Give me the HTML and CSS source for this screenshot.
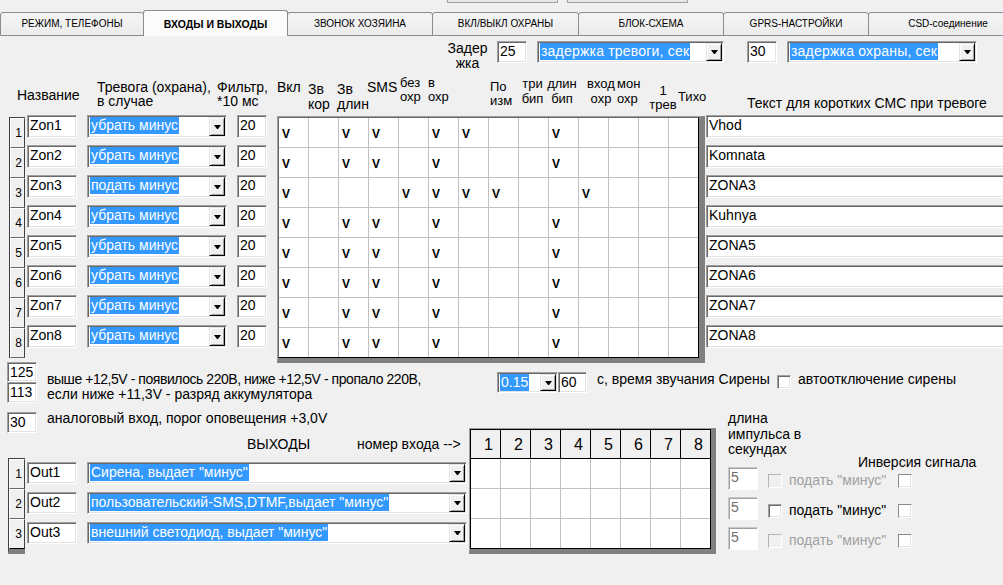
FILE: index.html
```html
<!DOCTYPE html>
<html lang="ru">
<head>
<meta charset="utf-8">
<title>Входы и выходы</title>
<link rel="stylesheet" href="styles.css">
</head>
<body>
<div class="topstrip"><span class="tb tb1"></span><span class="tb tb2"></span></div>
<div class="tabs">
  <div class="tab tw1">РЕЖИМ, ТЕЛЕФОНЫ</div>
  <div class="tab tw2 active">ВХОДЫ И ВЫХОДЫ</div>
  <div class="tab tw3">ЗВОНОК ХОЗЯИНА</div>
  <div class="tab tw4">ВКЛ/ВЫКЛ ОХРАНЫ</div>
  <div class="tab tw5">БЛОК-СХЕМА</div>
  <div class="tab tw6">GPRS-НАСТРОЙКИ</div>
  <div class="tab tw7">CSD-соединение</div>
</div>

<div class="delayrow">
  <div class="delaylbl">Задер<br>жка</div>
  <div class="tx d30">25</div>
  <div class="sel s187"><span class="hl wide">задержка тревоги, сек</span><span class="dd"></span></div>
  <div class="tx d30 gap23">30</div>
  <div class="sel s190"><span class="hl wide">задержка охраны, сек</span><span class="dd"></span></div>
</div>

<div class="heads">
  <div class="h h-name">Название</div>
  <div class="h h-trev">Тревога (охрана),<br>в случае</div>
  <div class="h h-filt">Фильтр,<br>*10 мс</div>
  <div class="h h-vkl">Вкл</div>
  <div class="h h-zk">Зв<br>кор</div>
  <div class="h h-zd">Зв<br>длин</div>
  <div class="h h-sms">SMS</div>
  <div class="h sm h-boh">без<br>охр</div>
  <div class="h sm h-voh">в<br>охр</div>
  <div class="h sm h-pi">По<br>изм</div>
  <div class="h sm h-tb">три<br>бип</div>
  <div class="h sm h-db">длин<br>бип</div>
  <div class="h h-sp"></div>
  <div class="h sm h-vh">вход<br>охр</div>
  <div class="h sm h-mo">мон<br>охр</div>
  <div class="h sm h-1t">1<br>трев</div>
  <div class="h sm h-ti">Тихо</div>
  <div class="h h-txt">Текст для коротких СМС при тревоге</div>
</div>

<div class="zones">
  <div class="rn">
    <div class="rb">1</div><div class="rb">2</div><div class="rb">3</div><div class="rb">4</div>
    <div class="rb">5</div><div class="rb">6</div><div class="rb">7</div><div class="rb">8</div>
  </div>
  <div class="zf">
    <div class="zrow"><div class="tx nm">Zon1</div><div class="sel s140"><span class="hl">убрать минус</span><span class="dd"></span></div><div class="tx fl">20</div></div>
    <div class="zrow"><div class="tx nm">Zon2</div><div class="sel s140"><span class="hl">убрать минус</span><span class="dd"></span></div><div class="tx fl">20</div></div>
    <div class="zrow"><div class="tx nm">Zon3</div><div class="sel s140"><span class="hl">подать минус</span><span class="dd"></span></div><div class="tx fl">20</div></div>
    <div class="zrow"><div class="tx nm">Zon4</div><div class="sel s140"><span class="hl">убрать минус</span><span class="dd"></span></div><div class="tx fl">20</div></div>
    <div class="zrow"><div class="tx nm">Zon5</div><div class="sel s140"><span class="hl">убрать минус</span><span class="dd"></span></div><div class="tx fl">20</div></div>
    <div class="zrow"><div class="tx nm">Zon6</div><div class="sel s140"><span class="hl">убрать минус</span><span class="dd"></span></div><div class="tx fl">20</div></div>
    <div class="zrow"><div class="tx nm">Zon7</div><div class="sel s140"><span class="hl">убрать минус</span><span class="dd"></span></div><div class="tx fl">20</div></div>
    <div class="zrow"><div class="tx nm">Zon8</div><div class="sel s140"><span class="hl">убрать минус</span><span class="dd"></span></div><div class="tx fl">20</div></div>
  </div>
  <div class="gw">
    <div class="grid">
      <span class="c">V</span><span class="c"></span><span class="c">V</span><span class="c">V</span><span class="c"></span><span class="c">V</span><span class="c">V</span><span class="c"></span><span class="c"></span><span class="c">V</span><span class="c"></span><span class="c"></span><span class="c"></span><span class="c"></span>
      <span class="c">V</span><span class="c"></span><span class="c">V</span><span class="c">V</span><span class="c"></span><span class="c">V</span><span class="c"></span><span class="c"></span><span class="c"></span><span class="c">V</span><span class="c"></span><span class="c"></span><span class="c"></span><span class="c"></span>
      <span class="c">V</span><span class="c"></span><span class="c"></span><span class="c"></span><span class="c">V</span><span class="c">V</span><span class="c">V</span><span class="c">V</span><span class="c"></span><span class="c"></span><span class="c">V</span><span class="c"></span><span class="c"></span><span class="c"></span>
      <span class="c">V</span><span class="c"></span><span class="c">V</span><span class="c">V</span><span class="c"></span><span class="c">V</span><span class="c"></span><span class="c"></span><span class="c"></span><span class="c">V</span><span class="c"></span><span class="c"></span><span class="c"></span><span class="c"></span>
      <span class="c">V</span><span class="c"></span><span class="c">V</span><span class="c">V</span><span class="c"></span><span class="c">V</span><span class="c"></span><span class="c"></span><span class="c"></span><span class="c">V</span><span class="c"></span><span class="c"></span><span class="c"></span><span class="c"></span>
      <span class="c">V</span><span class="c"></span><span class="c">V</span><span class="c">V</span><span class="c"></span><span class="c">V</span><span class="c"></span><span class="c"></span><span class="c"></span><span class="c">V</span><span class="c"></span><span class="c"></span><span class="c"></span><span class="c"></span>
      <span class="c">V</span><span class="c"></span><span class="c">V</span><span class="c">V</span><span class="c"></span><span class="c">V</span><span class="c"></span><span class="c"></span><span class="c"></span><span class="c">V</span><span class="c"></span><span class="c"></span><span class="c"></span><span class="c"></span>
      <span class="c">V</span><span class="c"></span><span class="c">V</span><span class="c">V</span><span class="c"></span><span class="c">V</span><span class="c"></span><span class="c"></span><span class="c"></span><span class="c">V</span><span class="c"></span><span class="c"></span><span class="c"></span><span class="c"></span>
    </div>
  </div>
  <div class="sms">
    <div class="tx smt">Vhod</div>
    <div class="tx smt">Komnata</div>
    <div class="tx smt">ZONA3</div>
    <div class="tx smt">Kuhnya</div>
    <div class="tx smt">ZONA5</div>
    <div class="tx smt">ZONA6</div>
    <div class="tx smt">ZONA7</div>
    <div class="tx smt">ZONA8</div>
  </div>
</div>

<div class="power">
  <div class="vs"><div class="tx v1">125</div><div class="tx v2">113</div></div>
  <div class="ptext"><span class="narrow">выше +12,5V - появилось 220В, ниже +12,5V - пропало 220В,</span><br>если ниже +11,3V - разряд аккумулятора</div>
  <div class="sel s60"><span class="hl">0.15</span><span class="dd"></span></div>
  <div class="tx t60">60</div>
  <div class="sir">с, время звучания Сирены</div>
  <div class="cb cba"></div>
  <div class="auto">автоотключение сирены</div>
</div>

<div class="lower">
  <div class="ll">
    <div class="analog"><div class="tx a30">30</div><div class="atext">аналоговый вход, порог оповещения +3,0V</div></div>
    <div class="outhead"><div class="oh1">ВЫХОДЫ</div><div>номер входа --&gt;</div></div>
    <div class="outrows">
      <div class="rn orn"><div class="rb">1</div><div class="rb">2</div><div class="rb">3</div></div>
      <div class="of">
        <div class="orow"><div class="tx onm">Out1</div><div class="sel s380"><span class="hl">Сирена, выдает "минус"</span><span class="dd"></span></div></div>
        <div class="orow"><div class="tx onm">Out2</div><div class="sel s380"><span class="hl">пользовательский-SMS,DTMF,выдает "минус"</span><span class="dd"></span></div></div>
        <div class="orow"><div class="tx onm">Out3</div><div class="sel s380"><span class="hl">внешний светодиод, выдает "минус"</span><span class="dd"></span></div></div>
      </div>
    </div>
  </div>
  <div class="ogw">
    <div class="og">
      <span class="oh">1</span><span class="oh">2</span><span class="oh">3</span><span class="oh">4</span><span class="oh">5</span><span class="oh">6</span><span class="oh">7</span><span class="oh">8</span>
      <span class="oc"></span><span class="oc"></span><span class="oc"></span><span class="oc"></span><span class="oc"></span><span class="oc"></span><span class="oc"></span><span class="oc"></span>
      <span class="oc"></span><span class="oc"></span><span class="oc"></span><span class="oc"></span><span class="oc"></span><span class="oc"></span><span class="oc"></span><span class="oc"></span>
      <span class="oc"></span><span class="oc"></span><span class="oc"></span><span class="oc"></span><span class="oc"></span><span class="oc"></span><span class="oc"></span><span class="oc"></span>
    </div>
  </div>
  <div class="pulse">
    <div class="ptop"><div class="dl">длина<br>импульса в<br>секундах</div><div class="inv">Инверсия сигнала</div></div>
    <div class="prow"><div class="tx p5">5</div><div class="cb dis"></div><div class="plbl dim">подать "минус"</div><div class="cb lt"></div></div>
    <div class="prow"><div class="tx p5">5</div><div class="cb"></div><div class="plbl">подать "минус"</div><div class="cb lt"></div></div>
    <div class="prow"><div class="tx p5">5</div><div class="cb dis"></div><div class="plbl dim">подать "минус"</div><div class="cb lt"></div></div>
  </div>
</div>
</body>
</html>
```

FILE: styles.css
```css
* { box-sizing: border-box; }
html, body { margin: 0; padding: 0; }
body {
  width: 1003px;
  height: 585px;
  overflow: hidden;
  background: #f0f0f0;
  font-family: "Liberation Sans", Arial, sans-serif;
  font-size: 14px;
  color: #000;
}

/* top cut-off buttons */
.topstrip { display: flex; height: 3px; padding-left: 447px; }
.tb { height: 3px; border: 1px solid #a0a0a0; border-top: none; background: #e6e6e6; }
.tb1 { width: 111px; }
.tb2 { width: 121px; margin-left: 9px; }

/* tabs */
.tabs { display: flex; align-items: flex-end; height: 33px; }
.tab {
  flex: none;
  height: 24px;
  margin-right: -1px;
  border: 1px solid #898c95;
  border-radius: 3px 3px 0 0;
  background: linear-gradient(#f4f4f4, #ececec);
  font-size: 10px;
  line-height: 22px;
  text-align: center;
  white-space: nowrap;
}
.tab.active {
  position: relative;
  z-index: 1;
  height: 26px;
  border-bottom: none;
  background: #fbfbfb;
  font-weight: bold;
  font-size: 10.5px;
  padding-top: 2px;
  line-height: 23px;
}
.tw1 { width: 144px; }
.tw2 { width: 145px; }
.tw3 { width: 146px; }
.tw4 { width: 147px; }
.tw5 { width: 146px; }
.tw6 { width: 146px; }
.tw7 { width: 160px; }

/* sunken text field */
.tx {
  flex: none;
  background: #fff;
  border: 1px solid;
  border-color: #a0a0a0 #fff #fff #a0a0a0;
  box-shadow: inset 1px 1px 0 #696969, inset -1px -1px 0 #e3e3e3;
  padding: 1px 0 0 2px;
  line-height: 16px;
  white-space: nowrap;
  overflow: hidden;
}

/* combo box */
.sel {
  flex: none;
  display: flex;
  background: #fff;
  border: 1px solid;
  border-color: #a0a0a0 #fff #fff #a0a0a0;
  box-shadow: inset 1px 1px 0 #696969, inset -1px -1px 0 #e3e3e3;
  padding: 1px;
  white-space: nowrap;
  overflow: hidden;
}
.hl {
  flex: none;
  display: inline-block;
  height: 17px;
  line-height: 17px;
  margin-left: 1px;
  padding: 0 1px;
  background: #3399ff;
  color: #fff;
}
.hl.wide { letter-spacing: 0.2px; }
.dd {
  flex: none;
  margin-left: auto;
  width: 16px;
  align-self: stretch;
  display: flex;
  align-items: center;
  justify-content: center;
  background: #f0f0f0;
  border: 1px solid;
  border-color: #e3e3e3 #000 #000 #e3e3e3;
  box-shadow: inset 1px 1px 0 #fff, inset -1px -1px 0 #a0a0a0;
}
.dd::after {
  content: "";
  box-sizing: content-box;
  width: 1px;
  height: 0;
  border-left: 3px solid transparent;
  border-right: 3px solid transparent;
  border-top: 4px solid #000;
}

/* checkbox */
.cb {
  flex: none;
  width: 14px;
  height: 14px;
  background: #fff;
  border: 1px solid;
  border-color: #a0a0a0 #fff #fff #a0a0a0;
  box-shadow: inset 1px 1px 0 #696969, inset -1px -1px 0 #e3e3e3;
}
.cb.lt { box-shadow: inset -1px -1px 0 #e3e3e3; border-color: #8a8a8a #fff #fff #8a8a8a; }
.cb.dis { background: #f0f0f0; box-shadow: none; border-color: #b4b4b4 #fff #fff #b4b4b4; }

/* delay row */
.delayrow { display: flex; align-items: flex-start; height: 27px; padding: 5px 0 0 447px; }
.delaylbl { width: 41px; margin-right: 9px; text-align: center; line-height: 15px; }
.d30 { width: 30px; height: 22px; }
.gap23 { margin-left: 23px; }
.s187 { width: 187px; height: 22px; margin-left: 10px; }
.s190 { width: 190px; height: 22px; margin-left: 10px; }

/* column headers */
.heads { display: flex; align-items: flex-start; height: 52px; padding-left: 17px; }
.h { flex: none; white-space: nowrap; line-height: 14px; }
.h.sm { font-size: 13px; }
.h-name { width: 80px; margin-top: 25px; }
.h-trev { width: 120px; margin-top: 17px; }
.h-filt { width: 60px; margin-top: 17px; }
.h-vkl { width: 28px; margin-top: 17px; }
.h-zk { width: 30px; margin-top: 19px; line-height: 15px; padding-left: 3px; }
.h-zd { width: 32px; margin-top: 19px; line-height: 15px; padding-left: 2px; }
.h-sms { width: 33px; margin-top: 17px; }
.h-boh { width: 28px; margin-top: 13px; }
.h-voh { width: 62px; margin-top: 13px; }
.h-pi { width: 29px; margin-top: 17px; }
.h-tb { width: 27px; margin-top: 13px; line-height: 15px; text-align: center; }
.h-db { width: 32px; margin-top: 13px; line-height: 15px; text-align: center; }
.h-sp { width: 7px; }
.h-vh { width: 32px; margin-top: 13px; line-height: 15px; text-align: center; }
.h-mo { width: 31px; margin-top: 13px; line-height: 15px; }
.h-1t { width: 30px; margin-top: 21px; text-align: center; }
.h-ti { width: 69px; margin-top: 27px; }
.h-txt { margin-top: 33px; }

/* zones */
.zones { display: flex; align-items: flex-start; height: 247px; padding-left: 9px; }
.rn { flex: none; width: 16px; margin-top: 2px; border-left: 1px solid #404040; border-top: 1px solid #404040; }
.rb {
  height: 30px;
  border: 1px solid;
  border-color: #fff #404040 #696969 #fff;
  background: #f0f0f0;
  font-size: 12px;
  line-height: 13px;
  text-align: right;
  padding: 8px 2px 0 0;
}
.zf { flex: none; margin-left: 2px; }
.zrow { display: flex; align-items: flex-start; height: 30px; }
.nm { width: 50px; height: 23px; }
.s140 { width: 140px; height: 23px; margin-left: 10px; }
.fl { width: 30px; height: 23px; margin-left: 10px; }

.gw {
  flex: none;
  margin-left: 10px;
  margin-top: 1px;
  border-left: 1px solid #a0a0a0;
  border-top: 1px solid #a0a0a0;
  border-right: 6px solid #808080;
  border-bottom: 5px solid #808080;
}
.grid {
  display: grid;
  grid-template-columns: repeat(13, 30px) 29px;
  background: #fff;
  border-left: 1px solid #696969;
  border-top: 1px solid #696969;
  border-right: 1px solid #000;
  border-bottom: 1px solid #000;
}
.c {
  height: 30px;
  border-right: 1px solid #c0c0c0;
  border-bottom: 1px solid #c0c0c0;
  font-weight: bold;
  font-size: 12px;
  line-height: 12px;
  padding: 10px 0 0 3px;
}
.c:nth-child(14n) { border-right: none; }
.c:nth-last-child(-n+14) { border-bottom: none; height: 29px; }

.sms { flex: none; width: 320px; margin-left: 1px; }
.smt { width: 320px; height: 23px; margin-bottom: 7px; }

/* power row */
.power { display: flex; align-items: flex-start; height: 41px; padding-left: 7px; }
.vs { flex: none; width: 30px; }
.v1 { width: 30px; height: 20px; }
.v2 { width: 30px; height: 21px; }
.ptext { flex: none; width: 450px; margin: 10px 0 0 10px; line-height: 15px; white-space: nowrap; }
.narrow { letter-spacing: -0.45px; }
.s60 { width: 61px; height: 21px; margin-top: 10px; }
.t60 { width: 29px; height: 21px; margin-top: 10px; }
.sir { flex: none; width: 180px; margin: 10px 0 0 10px; line-height: 15px; white-space: nowrap; }
.cba { margin-top: 13px; }
.auto { margin: 10px 0 0 7px; line-height: 15px; white-space: nowrap; }

/* lower area */
.lower { display: flex; align-items: flex-start; }
.ll { flex: none; width: 469px; }
.analog { display: flex; align-items: flex-start; margin-top: 9px; padding-left: 7px; }
.a30 { width: 30px; height: 21px; }
.atext { margin-left: 10px; line-height: 13px; white-space: nowrap; }
.outhead { display: flex; margin-top: 4px; padding-left: 247px; line-height: 15px; white-space: nowrap; }
.oh1 { width: 110px; }
.outrows { display: flex; align-items: flex-start; margin-top: 6px; padding-left: 8px; }
.orn { width: 17px; margin-top: 0; border-bottom: 5px solid #808080; }
.orn .rb:last-child { border-bottom-color: #000; }
.of { flex: none; margin-left: 2px; padding-top: 4px; }
.orow { display: flex; align-items: flex-start; height: 30px; }
.onm { width: 50px; height: 22px; }
.s380 { width: 380px; height: 22px; margin-left: 10px; }

.ogw {
  flex: none;
  margin-top: 25px;
  border-left: 1px solid #a0a0a0;
  border-top: 1px solid #a0a0a0;
  border-right: 5px solid #808080;
  border-bottom: 5px solid #808080;
}
.og {
  display: grid;
  grid-template-columns: repeat(7, 30px) 29px;
  background: #fff;
  border: 1px solid #000;
}
.oh {
  height: 29px;
  background: #f0f0f0;
  border-right: 1px solid #000;
  border-bottom: 1px solid #000;
  font-size: 16px;
  line-height: 26px;
  padding: 2px 7px 0 0;
  text-align: right;
}
.oh:nth-child(8) { border-right: none; }
.oc { height: 30px; border-right: 1px solid #c0c0c0; border-bottom: 1px solid #c0c0c0; }
.oc:nth-child(8n) { border-right: none; }
.oc:nth-last-child(-n+8) { border-bottom: none; height: 29px; }

.pulse { flex: none; margin: 8px 0 0 12px; }
.ptop { display: flex; align-items: flex-start; height: 56px; }
.dl { flex: none; width: 130px; line-height: 15.5px; white-space: nowrap; }
.inv { margin-top: 44px; line-height: 15px; white-space: nowrap; }
.prow { display: flex; align-items: flex-start; height: 30px; }
.p5 { width: 30px; height: 23px; color: #6d6d6d; border-color: #c8c8c8 #fff #fff #c8c8c8; box-shadow: inset 1px 1px 0 #a0a0a0; }
.prow .cb { margin-top: 7px; }
.prow .p5 + .cb { margin-left: 10px; }
.plbl { flex: none; width: 109px; margin: 6px 0 0 7px; line-height: 15px; white-space: nowrap; }
.plbl.dim { color: #a0a0a0; }
```
